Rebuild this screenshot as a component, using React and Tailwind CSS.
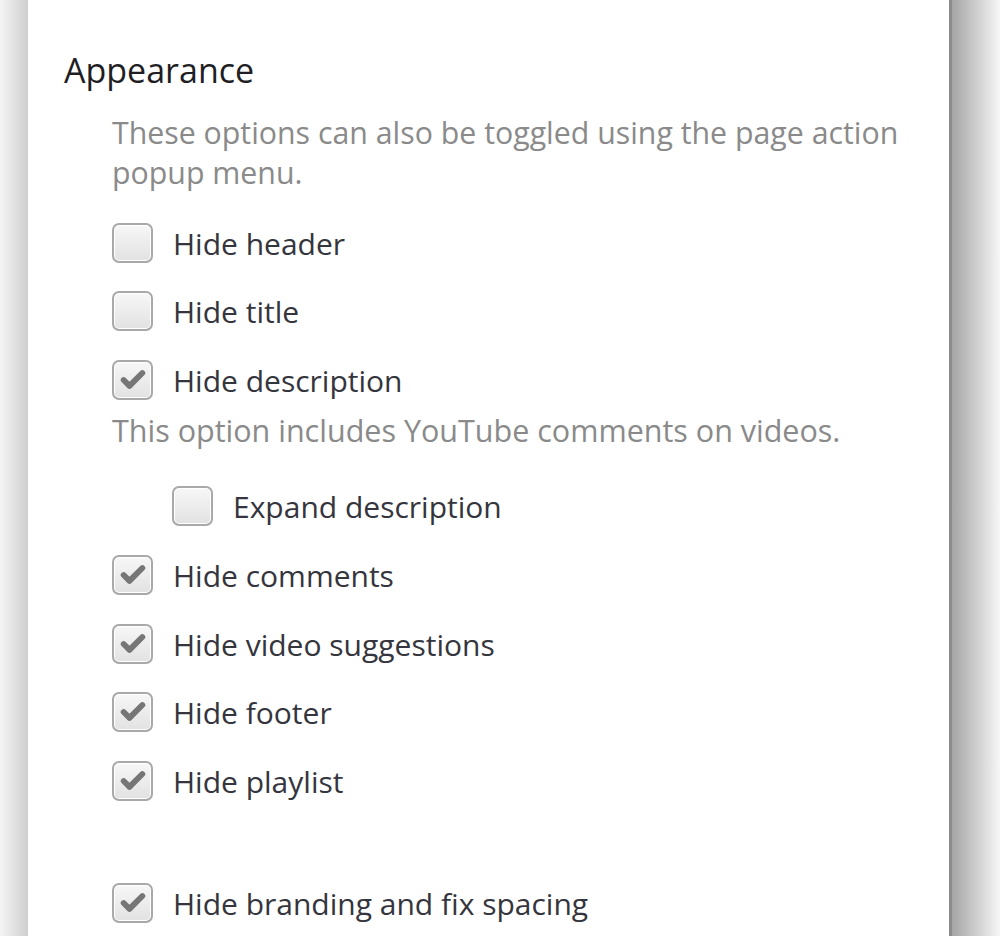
import { Check } from "lucide-react";

function Box({ checked }) {
  return (
    <span className="flex h-[40px] w-[41px] shrink-0 items-center justify-center rounded-[7px] border-2 border-[#a9a9a9] bg-gradient-to-b from-[#f7f7f7] to-[#e2e2e2] shadow-[inset_0_0_0_1px_#fff]">
      {checked && <Check className="h-[28px] w-[28px] text-[#767676]" strokeWidth={5} />}
    </span>
  );
}

function Option({ label, checked, indent }) {
  return (
    <label className={`flex h-[40px] items-center gap-[20px] ${indent ? "ml-[60px]" : ""}`}>
      <Box checked={checked} />
      <span className="text-[30px] text-[#35353d]">{label}</span>
    </label>
  );
}

export default function App() {
  return (
    <div
      className="flex h-[936px] w-[1000px] overflow-hidden bg-white"
      style={{ fontFamily: '"Open Sans", "Noto Sans", sans-serif' }}
    >
      <div className="w-[28px] shrink-0 bg-gradient-to-r from-[#f5f5f5] to-[#cfcfcf]" />
      <div className="flex-1 bg-white pl-[36px] pt-[48px]">
        <h2 className="text-[34px] leading-[44px] text-[#1e1e24]">Appearance</h2>
        <div className="pl-[48px]">
          <p className="mt-[21px] text-[30.3px] leading-[40px] text-[#8a8a8a]">
            These options can also be toggled using the page action
            <br />
            popup menu.
          </p>
          <div className="mt-[30px] flex flex-col gap-[28px]">
            <Option label="Hide header" />
            <Option label="Hide title" />
            <div className="mt-[1px]">
              <Option label="Hide description" checked />
              <p className="mt-[10px] text-[30.5px] leading-[40px] text-[#8a8a8a]">
                This option includes YouTube comments on videos.
              </p>
              <div className="mt-[36px]">
                <Option label="Expand description" indent />
              </div>
            </div>
            <div className="mt-[1px]">
              <Option label="Hide comments" checked />
            </div>
            <div className="mt-[1px]">
              <Option label="Hide video suggestions" checked />
            </div>
            <Option label="Hide footer" checked />
            <div className="mt-[1px]">
              <Option label="Hide playlist" checked />
            </div>
            <div className="mt-[54px]">
              <Option label="Hide branding and fix spacing" checked />
            </div>
          </div>
        </div>
      </div>
      <div className="w-[3px] shrink-0 bg-[#8c8c8c]" />
      <div className="w-[48px] shrink-0 bg-gradient-to-r from-[#a5a5a5] to-[#f7f7f7]" />
    </div>
  );
}
